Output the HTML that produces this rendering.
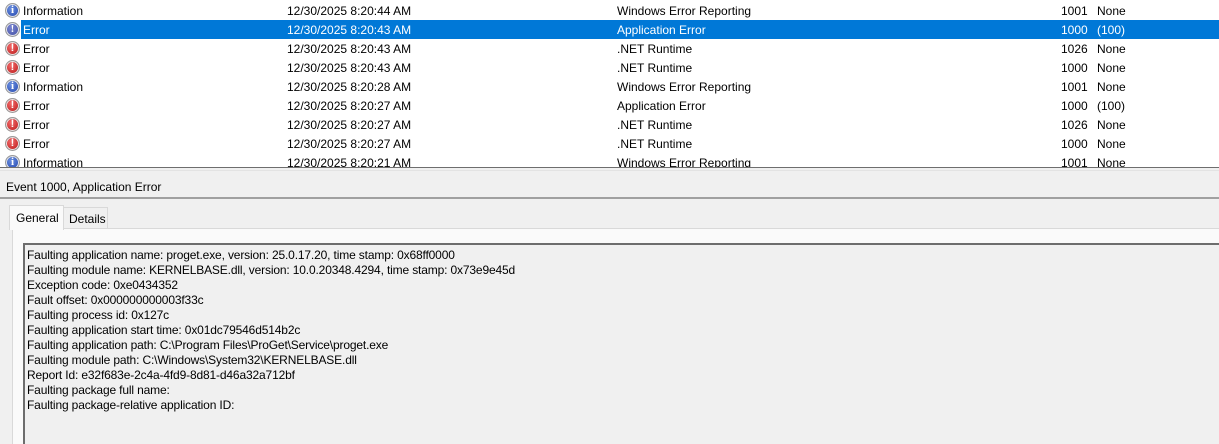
<!DOCTYPE html>
<html style="overflow:hidden;width:1219px;height:444px"><head><style>
*{margin:0;padding:0;box-sizing:border-box}
body{width:1219px;height:444px;overflow:hidden;background:#f0f0f0;font-family:"Liberation Sans",sans-serif;font-size:12px;color:#000;position:relative}
.list{position:absolute;left:0;top:0;width:1219px;height:168px;background:#fff;border-bottom:1px solid #6e6e6e;overflow:hidden}
.row{position:absolute;left:0;height:19px;width:1219px;line-height:21px;white-space:nowrap}
.row span{position:absolute}
.sel .bg{position:absolute;left:21px;right:0;top:0;bottom:0;background:#0078d7}
.sel span{color:#fff}
.ic{position:absolute;left:5px;top:2px;width:15px;height:15px;border-radius:50%;border:1px solid #9a9a9a;box-shadow:inset 0 0 0 1px #e8e8e8;text-align:center;font:bold 11px/13px "Liberation Serif",serif;color:#fff}
.info{background:radial-gradient(circle at 40% 35%,#6a8fe0,#1c3fa8)}
.err{background:radial-gradient(circle at 40% 35%,#f26a6a,#b41010);font-family:"Liberation Sans",sans-serif;font-size:11px}
.selic{background:radial-gradient(circle at 40% 35%,#7a85d0,#3c4aa0)}
.c1{left:23px}.c2{left:287px}.c3{left:617px}.c4{left:1061px}.c5{left:1097px}
.hdr{position:absolute;left:0;top:170px;width:1219px;height:29px;border-top:1px solid #e3e3e3;border-bottom:2px solid #a0a0a0}
.hdr span{position:absolute;left:6px;top:9px}
.tab1{position:absolute;left:9px;top:205px;width:55px;height:25px;background:#fafafa;border:1px solid #d9d9d9;border-bottom:none;padding:5px 0 0 6px;z-index:2}
.tab2{position:absolute;left:63px;top:207px;width:45px;height:22px;background:#f0f0f0;border:1px solid #d9d9d9;padding:4px 0 0 5px}
.panel{position:absolute;left:12px;top:228px;width:1207px;height:216px;background:#fafafa;border-top:1px solid #d9d9d9;border-left:1px solid #d9d9d9}
.box{position:absolute;left:23px;top:243px;width:1196px;height:201px;background:#f0f0f0;border-top:2px solid #6d6d6d;border-left:2px solid #6d6d6d;padding:3px 0 0 2px;line-height:15px;white-space:nowrap;font-size:12px;letter-spacing:-0.15px}
</style></head><body>
<div class="list">
<div class="row" style="top:1px"><div class="ic info">i</div><span class="c1">Information</span><span class="c2">12/30/2025 8:20:44 AM</span><span class="c3">Windows Error Reporting</span><span class="c4">1001</span><span class="c5">None</span></div>
<div class="row sel" style="top:20px"><div class="bg"></div><div class="ic selic">!</div><span class="c1">Error</span><span class="c2">12/30/2025 8:20:43 AM</span><span class="c3">Application Error</span><span class="c4">1000</span><span class="c5">(100)</span></div>
<div class="row" style="top:39px"><div class="ic err">!</div><span class="c1">Error</span><span class="c2">12/30/2025 8:20:43 AM</span><span class="c3">.NET Runtime</span><span class="c4">1026</span><span class="c5">None</span></div>
<div class="row" style="top:58px"><div class="ic err">!</div><span class="c1">Error</span><span class="c2">12/30/2025 8:20:43 AM</span><span class="c3">.NET Runtime</span><span class="c4">1000</span><span class="c5">None</span></div>
<div class="row" style="top:77px"><div class="ic info">i</div><span class="c1">Information</span><span class="c2">12/30/2025 8:20:28 AM</span><span class="c3">Windows Error Reporting</span><span class="c4">1001</span><span class="c5">None</span></div>
<div class="row" style="top:96px"><div class="ic err">!</div><span class="c1">Error</span><span class="c2">12/30/2025 8:20:27 AM</span><span class="c3">Application Error</span><span class="c4">1000</span><span class="c5">(100)</span></div>
<div class="row" style="top:115px"><div class="ic err">!</div><span class="c1">Error</span><span class="c2">12/30/2025 8:20:27 AM</span><span class="c3">.NET Runtime</span><span class="c4">1026</span><span class="c5">None</span></div>
<div class="row" style="top:134px"><div class="ic err">!</div><span class="c1">Error</span><span class="c2">12/30/2025 8:20:27 AM</span><span class="c3">.NET Runtime</span><span class="c4">1000</span><span class="c5">None</span></div>
<div class="row" style="top:153px"><div class="ic info">i</div><span class="c1">Information</span><span class="c2">12/30/2025 8:20:21 AM</span><span class="c3">Windows Error Reporting</span><span class="c4">1001</span><span class="c5">None</span></div>
</div>
<div class="hdr"><span>Event 1000, Application Error</span></div>
<div class="panel"></div>
<div class="tab1">General</div>
<div class="tab2">Details</div>
<div class="box">Faulting application name: proget.exe, version: 25.0.17.20, time stamp: 0x68ff0000<br>Faulting module name: KERNELBASE.dll, version: 10.0.20348.4294, time stamp: 0x73e9e45d<br>Exception code: 0xe0434352<br>Fault offset: 0x000000000003f33c<br>Faulting process id: 0x127c<br>Faulting application start time: 0x01dc79546d514b2c<br>Faulting application path: C:\Program Files\ProGet\Service\proget.exe<br>Faulting module path: C:\Windows\System32\KERNELBASE.dll<br>Report Id: e32f683e-2c4a-4fd9-8d81-d46a32a712bf<br>Faulting package full name: <br>Faulting package-relative application ID: </div>
</body></html>
